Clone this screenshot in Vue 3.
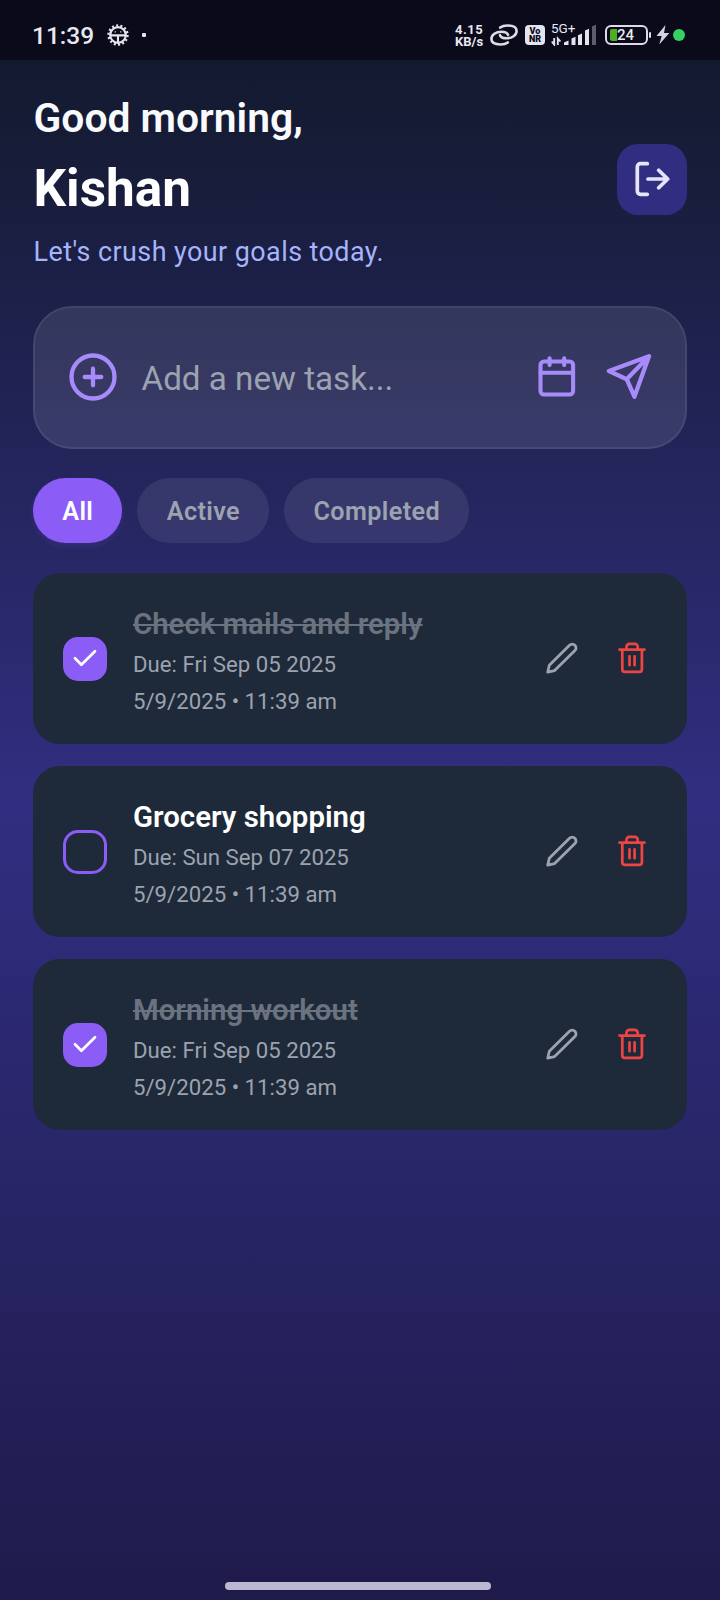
<script setup>
import { ref } from 'vue'

const filters = ['All', 'Active', 'Completed']
const active = ref('All')

const tasks = ref([
  { id: 1, title: 'Check mails and reply', due: 'Due: Fri Sep 05 2025', created: '5/9/2025 • 11:39 am', done: true },
  { id: 2, title: 'Grocery shopping', due: 'Due: Sun Sep 07 2025', created: '5/9/2025 • 11:39 am', done: false },
  { id: 3, title: 'Morning workout', due: 'Due: Fri Sep 05 2025', created: '5/9/2025 • 11:39 am', done: true },
])
</script>

<template>
  <div class="screen">
    <div class="status">
      <span class="clock">11:39</span>
      <svg class="gear" width="24" height="24" viewBox="0 0 24 24" fill="none" stroke="#e4e4ee">
        <circle cx="12" cy="12" r="9.5" stroke-width="2.4" stroke-dasharray="2 2.263" />
        <circle cx="12" cy="12" r="7.800" stroke-width="2.200" />
        <path d="M4 12.400h16M12 12.500v8" stroke-width="2.100" />
        <path d="M8.600 8.800h1.200M14.200 8.800h1.200" stroke-width="1.200" />
      </svg>
      <span class="dot"></span>
      <div class="speed"><span>4.15</span><span>KB/s</span></div>
      <svg class="link" width="28" height="22" viewBox="0 0 28 22" fill="none" stroke="#dcdce6" stroke-width="2.600" stroke-linecap="round">
        <path d="M10.200 3.600C12 2.100 14.300 1.500 17.500 1.500c5.400 0 9.100 1.900 9.100 5.400 0 4.300-4.600 7.400-10 7.400-3.300 0-5.800-1-6.600-3.100" />
        <path d="M17.800 18.400c-1.800 1.500-4.100 2.100-7.300 2.100-5.400 0-9.100-1.900-9.100-5.400 0-4.300 4.600-7.400 10-7.400 3.300 0 5.800 1 6.600 3.100" />
      </svg>
      <div class="vonr"><span>Vo</span><span>NR</span></div>
      <div class="network">
        <span class="gen">5G+</span>
        <svg width="46" height="22" viewBox="0 0 46 22" fill="#e4e4ee">
          <path d="M3.200 14v6.500L.8 17.500M6.800 21v-6.500l2.600 3" fill="none" stroke="#e4e4ee" stroke-width="1.900" />
          <path d="M13 21v-2.500l4.500-2V21z" />
          <path d="M20.500 21v-6.500l4-1.800V21z" />
          <path d="M27 21V11.200l4-1.800V21z" />
          <path d="M34 21V6.600l4-1.800V21z" />
          <path d="M41 21V2.200l4-1.400V21z" fill="#5d5c6c" />
        </svg>
      </div>
      <div class="battery"><i></i><span>24</span></div>
      <span class="nub"></span>
      <svg class="bolt" width="14" height="20" viewBox="0 0 14 20" fill="#d4d4de">
        <path d="M9.500 0L.5 11h5.200L3.300 19.500 13.300 8H8z" />
      </svg>
      <span class="live"></span>
    </div>

    <header class="header">
      <div>
        <p class="greeting">Good morning,</p>
        <h1 class="name">Kishan</h1>
        <p class="sub">Let's crush your goals today.</p>
      </div>
      <button class="logout" aria-label="Log out">
        <svg width="36" height="36" viewBox="0 0 36 36" fill="none" stroke="#e4e5fb" stroke-width="3.700" stroke-linecap="round" stroke-linejoin="round">
          <path d="M13.300 2.700H6.500A3.200 3.200 0 0 0 3.300 5.900v24.200a3.200 3.200 0 0 0 3.200 3.200h6.800M14 18h19.500M24.700 9.200l9 8.800-9 8.800" />
        </svg>
      </button>
    </header>

    <div class="composer">
      <svg width="48" height="48" viewBox="0 0 48 48" fill="none" stroke="#a78bfa" stroke-width="4.300" stroke-linecap="round">
        <circle cx="24" cy="24" r="21.500" />
        <path d="M24 15.700v16.600M15.700 24h16.600" />
      </svg>
      <span class="placeholder">Add a new task...</span>
      <svg class="calendar" width="38" height="42" viewBox="0 0 38 42" fill="none" stroke="#a78bfa" stroke-width="4.100" stroke-linecap="round">
        <rect x="2.500" y="5.500" width="32.600" height="33" rx="3.600" />
        <path d="M2.500 16.700h32.600M11.600 2.300v6.800M26.200 2.300v6.800" />
      </svg>
      <svg class="send" width="46" height="46" viewBox="0 0 46 46" fill="none" stroke="#a78bfa" stroke-width="4.300" stroke-linecap="round" stroke-linejoin="round">
        <path d="M43 2.200L2.900 17 20.700 25.200 28.400 42.700zM43 2.200L20.700 25.200" />
      </svg>
    </div>

    <div class="filters">
      <button v-for="f in filters" :key="f" class="chip" :class="{ on: f === active }" @click="active = f">{{ f }}</button>
    </div>

    <div class="list">
      <article v-for="t in tasks" :key="t.id" class="card">
        <span class="box" :class="{ checked: t.done }">
          <svg v-if="t.done" width="24" height="18" viewBox="0 0 24 18" fill="none" stroke="#fff" stroke-width="2.700" stroke-linecap="round" stroke-linejoin="round">
            <path d="M2 9.200l6.400 6.500L22 2.200" />
          </svg>
        </span>
        <div class="body">
          <h2 class="title" :class="{ struck: t.done }">{{ t.title }}</h2>
          <p class="meta">{{ t.due }}</p>
          <p class="meta">{{ t.created }}</p>
        </div>
        <svg class="edit" width="32" height="32" viewBox="0 0 32 32" fill="none" stroke="#9ca3af" stroke-width="2.800" stroke-linecap="round" stroke-linejoin="round">
          <path d="M1.700 30.200l1.600-6.900L23.500 3.200a3.800 3.800 0 0 1 5.400 5.400L8.600 28.600z" />
        </svg>
        <svg class="trash" width="28" height="32" viewBox="0 0 28 32" fill="none" stroke="#ef4444" stroke-width="2.700" stroke-linecap="round" stroke-linejoin="round">
          <path d="M1.500 7.600h25M4.300 8v19.200a2.600 2.600 0 0 0 2.600 2.600h14.400a2.600 2.600 0 0 0 2.600-2.600V8M8.500 7V4.800A2.900 2.900 0 0 1 11.400 1.900h5.400a2.900 2.900 0 0 1 2.900 2.900V7M11.500 14.400v8.800M16.600 14.400v8.800" />
        </svg>
      </article>
    </div>

    <div class="home"></div>
  </div>
</template>

<style>
body {
  background: #1e1b4b;
}
</style>

<style scoped>
.screen {
  box-sizing: border-box;
  width: 720px;
  height: 1600px;
  display: flex;
  flex-direction: column;
  overflow: hidden;
  background: linear-gradient(180deg, #111827 0%, #312e81 50%, #1e1b4b 100%);
  font-family: Roboto, 'Liberation Sans', sans-serif;
  color: #fff;
}
p, h1, h2 {
  margin: 0;
}
button {
  border: 0;
  padding: 0;
  font-family: inherit;
}
svg {
  flex: none;
  display: block;
}

.status {
  height: 60px;
  flex: none;
  box-sizing: border-box;
  display: flex;
  align-items: center;
  padding: 10px 35px 0 32px;
  background: #0b0a1b;
  color: #e8e8f0;
}
.clock {
  width: 74px;
  padding-top: 2px;
  font-size: 24.500px;
  line-height: 30px;
  font-weight: 500;
}
.dot {
  width: 4px;
  height: 4px;
  margin-left: 12px;
  border-radius: 1px;
  background: #e4e4ee;
}
.speed {
  margin-left: auto;
  width: 35px;
  padding-top: 2px;
  font-size: 13px;
  line-height: 12.500px;
  font-weight: 700;
  display: flex;
  flex-direction: column;
}
.speed span:first-child {
  letter-spacing: 0.5px;
}
.vonr {
  width: 20px;
  height: 20px;
  margin-left: 7px;
  border-radius: 4px;
  background: #e4e4ee;
  color: #0b0a1b;
  display: flex;
  flex-direction: column;
  align-items: center;
  justify-content: center;
  font-size: 9px;
  line-height: 8.500px;
  font-weight: 900;
}
.network {
  position: relative;
  width: 46px;
  margin-left: 6px;
}
.gen {
  position: absolute;
  left: 0;
  top: -3px;
  font-size: 13.500px;
  line-height: 14px;
}
.battery {
  position: relative;
  box-sizing: border-box;
  width: 43px;
  height: 20px;
  margin-left: 8px;
  border: 2px solid #dcdce6;
  border-radius: 6px;
  display: flex;
  align-items: center;
  padding-left: 3px;
}
.battery i {
  width: 7px;
  height: 12px;
  border-radius: 2px 0 0 2px;
  background: #4caf1c;
}
.battery span {
  font-size: 15px;
  line-height: 16px;
  font-weight: 500;
}
.nub {
  width: 2px;
  height: 6px;
  margin-left: 1px;
  border-radius: 1px;
  background: #dcdce6;
}
.bolt {
  margin-left: 5px;
}
.live {
  width: 12px;
  height: 12px;
  margin-left: 3px;
  border-radius: 50%;
  background: #34d265;
}

.header {
  display: flex;
  justify-content: space-between;
  align-items: flex-start;
  padding: 35px 33px 0 33.500px;
}
.greeting {
  font-size: 40.800px;
  line-height: 47px;
  font-weight: 600;
  color: #f8fafc;
}
.name {
  margin-top: 17px;
  font-size: 51.300px;
  line-height: 60px;
  font-weight: 700;
}
.sub {
  margin-top: 17px;
  font-size: 26.900px;
  line-height: 32px;
  letter-spacing: 0.450px;
  color: #a5b4fc;
}
.logout {
  width: 70px;
  height: 71px;
  margin-top: 49px;
  border-radius: 21px;
  background: #312e81;
  display: grid;
  place-items: center;
}
.logout svg {
  margin-bottom: 1px;
}

.composer {
  box-sizing: border-box;
  height: 143px;
  margin: 38px 33px 0;
  padding: 0 33px 0 34px;
  display: flex;
  align-items: center;
  border: 2px solid rgba(255, 255, 255, 0.08);
  border-radius: 39px;
  background: rgba(255, 255, 255, 0.1);
}
.composer svg {
  margin-bottom: 1px;
}
.placeholder {
  flex: 1;
  margin-left: 24.500px;
  padding-top: 3px;
  font-size: 33.200px;
  line-height: 40px;
  color: #9ca3af;
}
.send {
  margin-left: 30px;
}

.filters {
  display: flex;
  gap: 15px;
  margin: 29px 33px 0;
}
.chip {
  height: 65px;
  padding: 2px 29.200px 0;
  border-radius: 33px;
  background: rgba(255, 255, 255, 0.08);
  color: #9ca3af;
  font-size: 25.200px;
  font-weight: 600;
  letter-spacing: 0.400px;
}
.chip.on {
  background: #8b5cf6;
  color: #fff;
  box-shadow: 0 3px 6px rgba(139, 92, 246, 0.14);
}

.list {
  display: flex;
  flex-direction: column;
  gap: 22px;
  margin: 30px 33px 0;
}
.card {
  box-sizing: border-box;
  height: 171px;
  display: flex;
  align-items: center;
  padding: 0 41px 0 30px;
  border-radius: 27px;
  background: #1e2a3a;
}
.box {
  box-sizing: border-box;
  flex: none;
  width: 44px;
  height: 44px;
  border: 3.500px solid #8b5cf6;
  border-radius: 15px;
  display: grid;
  place-items: center;
}
.box svg {
  margin-bottom: 2px;
}
.box.checked {
  background: #8b5cf6;
}
.body {
  flex: 1;
  margin-left: 26px;
  padding-top: 4px;
}
.title {
  font-size: 29.400px;
  line-height: 36px;
  font-weight: 600;
  color: #fff;
}
.title.struck {
  color: #6b7280;
  text-decoration: line-through;
  text-decoration-thickness: 2px;
}
.meta {
  margin-top: 8px;
  font-size: 22.200px;
  line-height: 29px;
  color: #9ca3af;
}
.edit,
.trash {
  margin-bottom: 2px;
}
.trash {
  margin-left: 40px;
}

.home {
  width: 266px;
  height: 8px;
  margin: auto auto 10px 225px;
  border-radius: 4px;
  background: #bdb8d1;
}
</style>
